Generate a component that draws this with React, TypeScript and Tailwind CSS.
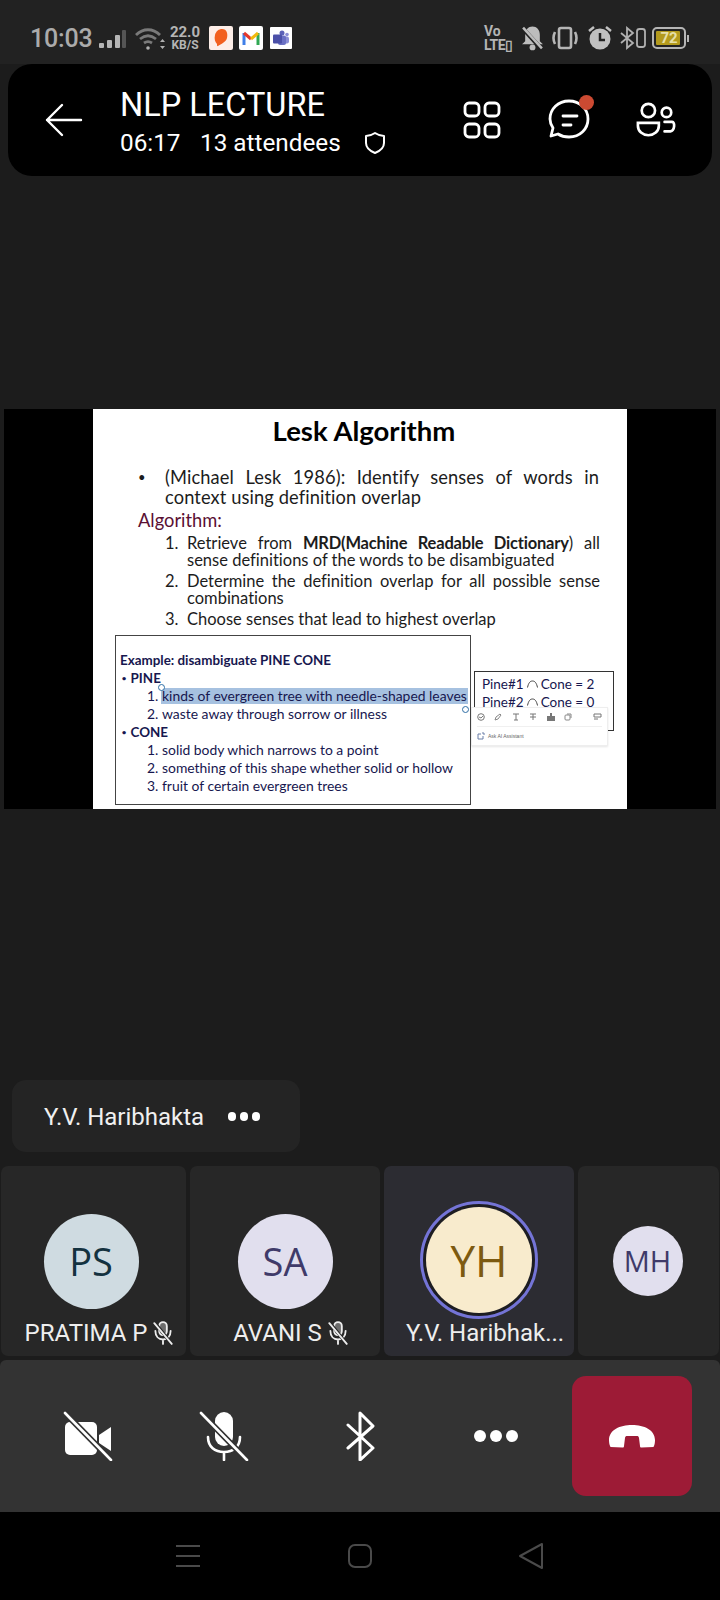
import type { ReactNode } from "react";

const Arch = () => (
  <svg width="11" height="8" viewBox="0 0 11 8" className="inline-block mx-[3px]" fill="none" stroke="#444" strokeWidth="1">
    <path d="M.5 7.500C1.500 3 3 1 5.500 1S9.500 3 10.500 7.500" />
  </svg>
);

const StatusBar = () => (
  <div className="h-[64px] bg-[#222222] relative flex items-center pt-[12px] pl-[30px] pr-[31px] font-['Roboto',sans-serif] text-[#ababab]">
    <span className="text-[25px] leading-none font-medium w-[67px] tracking-[-0.2px]">10:03</span>
    <svg width="30" height="20" viewBox="0 0 30 20" className="mt-[2px]">
      <rect x="2" y="14" width="5" height="5" rx="1" fill="#b5b5b5" />
      <rect x="10" y="11" width="5" height="8" rx="1" fill="#b5b5b5" />
      <rect x="18" y="6" width="5" height="13" rx="1" fill="#b5b5b5" />
      <rect x="25" y="1" width="4" height="18" rx="1" fill="#555" />
    </svg>
    <svg width="30" height="24" viewBox="0 0 30 24" className="ml-[8px] mt-[2px]" fill="none" stroke="#7a7a7a" strokeWidth="2.800">
      <path d="M1 8c7-7 17-7 24 0" />
      <path d="M5 12c5-4 11-4 16 0" />
      <path d="M9 16c3-2 5-2 8 0" />
      <circle cx="13" cy="21" r="1.800" fill="#b0b0b0" stroke="none" />
      <path d="M25 15l2.500-3 2.500 3zM25 19l2.500 3 2.500-3z" fill="#b0b0b0" stroke="none" />
    </svg>
    <div className="ml-[4px] w-[32px] flex flex-col items-center text-[15px] leading-[14px] font-bold text-[#b5b5b5]">
      <span>22.0</span>
      <span className="text-[12px] leading-[12px]">KB/S</span>
    </div>
    <div className="ml-[8px] w-[24px] h-[24px] bg-[#fdeee8] rounded-[2px] flex items-center justify-center">
      <svg width="16" height="20" viewBox="0 0 16 20"><path d="M9 1c5 0 6 5 5 9-1 4-6 6-9 8-1 .6-1-1-1-2C2 14 1 11 2 7c1-4 4-6 7-6z" fill="#f2601f" /></svg>
    </div>
    <div className="ml-[6px] w-[24px] h-[24px] bg-white rounded-[2px] flex items-center justify-center">
      <svg width="18" height="16" viewBox="0 0 18 16" fill="none" strokeWidth="3">
        <path d="M2 15V3" stroke="#3f7fe8" />
        <path d="M16 15V3" stroke="#30a853" />
        <path d="M2 3l7 6" stroke="#e5382c" />
        <path d="M9 9l7-6" stroke="#f3b90e" />
      </svg>
    </div>
    <div className="ml-[7px] w-[22px] h-[22px] bg-white rounded-[1px] flex items-center justify-center">
      <svg width="18" height="16" viewBox="0 0 18 16">
        <circle cx="10" cy="3" r="2.500" fill="#5c62b8" />
        <circle cx="15" cy="4.500" r="1.800" fill="#8b8fd6" />
        <rect x="11" y="6.500" width="6" height="7" rx="2" fill="#8b8fd6" />
        <rect x="6" y="5.500" width="8" height="9.500" rx="2" fill="#6a70c4" />
        <rect x="1" y="4.500" width="9" height="9" rx="1" fill="#4b50a8" />
      </svg>
    </div>

    <div className="ml-auto flex items-center">
      <div className="w-[30px] flex flex-col text-[14px] leading-[14px] font-bold text-[#b5b5b5]">
        <span>Vo</span>
        <span className="tracking-[-0.5px] whitespace-nowrap">LTE▯</span>
      </div>
      <svg width="23" height="26" viewBox="0 0 22 24" className="ml-[7px]">
        <path d="M11 1c4 0 7 3 7 8v6l3 3H1l3-3V9c0-5 3-8 7-8z" fill="#bdbdbd" />
        <circle cx="11" cy="21" r="2.800" fill="#bdbdbd" />
        <path d="M1 2l19 21" stroke="#222" strokeWidth="4" />
        <path d="M2 2l18 20" stroke="#bdbdbd" strokeWidth="2.400" />
      </svg>
      <svg width="30" height="24" viewBox="0 0 30 24" className="ml-[6px]" fill="none" stroke="#b5b5b5" strokeWidth="2.600">
        <rect x="9" y="2" width="12" height="20" rx="2" />
        <path d="M5 6c-2 4-2 8 0 12M25 6c2 4 2 8 0 12" />
      </svg>
      <svg width="26" height="26" viewBox="0 0 26 26" className="ml-[7px]">
        <circle cx="13" cy="14" r="10.500" fill="#c0c0c0" />
        <path d="M13 8v7h5" stroke="#222" strokeWidth="2.500" fill="none" />
        <path d="M2 6l5-4M24 6l-5-4" stroke="#c0c0c0" strokeWidth="2.500" />
      </svg>
      <svg width="27" height="24" viewBox="0 0 27 24" className="ml-[7px]" fill="none" stroke="#b0b0b0" strokeWidth="1.800">
        <path d="M1 7l12 10-6 5V2l6 5L1 17" />
        <rect x="17" y="3" width="8" height="18" rx="2.500" />
      </svg>
      <div className="ml-[5px] w-[34px] h-[22px] rounded-[5px] border-2 border-[#b5b5b5] p-[2px] relative">
        <div className="h-full w-[24px] bg-[#b39a1d] rounded-[1px]" />
        <span className="absolute inset-0 flex items-center justify-center text-[15px] font-bold leading-none text-[#e6dfa8]">72</span>
      </div>
      <div className="w-[2px] h-[7px] bg-[#b5b5b5] ml-[1px]" />
    </div>
  </div>
);

const MeetingHeader = () => (
  <div className="mx-[8px] h-[112px] rounded-[24px] bg-black flex items-center text-white font-['Roboto',sans-serif]">
    <svg width="38" height="34" viewBox="0 0 38 34" className="ml-[37px]" fill="none" stroke="#fff" strokeWidth="2.400" strokeLinecap="round" strokeLinejoin="round">
      <path d="M36 17H2M17 2L2 17l15 15" />
    </svg>
    <div className="ml-[37px] flex flex-col mt-[3px]">
      <span className="text-[32.500px] leading-[36px] whitespace-nowrap">NLP LECTURE</span>
      <div className="flex items-center text-[24.300px] leading-[28px] mt-[6px]">
        <span className="w-[80px]">06:17</span>
        <span>13 attendees</span>
        <svg width="22" height="24" viewBox="0 0 22 24" className="ml-[23px]" fill="none" stroke="#fff" strokeWidth="2" strokeLinejoin="round">
          <path d="M11 2c3 2 6 3 9 3v7c0 5-4 8-9 10-5-2-9-5-9-10V5c3 0 6-1 9-3z" />
        </svg>
      </div>
    </div>
    <svg width="38" height="38" viewBox="0 0 38 38" className="ml-auto" fill="none" stroke="#fff" strokeWidth="2.800">
      <rect x="2" y="2" width="14" height="13" rx="4" />
      <rect x="22" y="2" width="14" height="13" rx="4" />
      <rect x="2" y="23" width="14" height="13" rx="4" />
      <rect x="22" y="23" width="14" height="13" rx="4" />
    </svg>
    <div className="relative ml-[47px] w-[42px] h-[42px]">
      <svg width="42" height="42" viewBox="0 0 42 42" fill="none" stroke="#fff" strokeWidth="2.800" strokeLinecap="round" strokeLinejoin="round">
        <path d="M21 2c11 0 19 8 19 18s-8 18-19 18c-4 0-8-1-11-3l-7 2 2-8c-2-3-3-6-3-9C2 10 10 2 21 2z" />
        <path d="M15 17h14M15 26h8" />
      </svg>
      <span className="absolute -top-[4px] -right-[4px] w-[15px] h-[15px] rounded-full bg-[#cc4a32]" />
    </div>
    <svg width="40" height="38" viewBox="0 0 42 38" className="ml-[46px] mr-[36px]" fill="none" stroke="#fff" strokeWidth="2.800" strokeLinecap="round">
      <circle cx="13" cy="9" r="7" />
      <circle cx="32" cy="11" r="5" />
      <path d="M2 22h22v3c0 6-5 10-11 10S2 31 2 25z" />
      <path d="M30 21h8c3 0 3 9-2 10h-6" />
    </svg>
  </div>
);

const Example = ({ n, children, bold }: { n?: string; children: ReactNode; bold?: boolean }) =>
  n ? (
    <div className="flex pl-[31px] h-[18px] text-[13.900px]">
      <span className="w-[15px]">{n}</span>
      <span className="whitespace-nowrap">{children}</span>
    </div>
  ) : (
    <div className={`h-[18px] pl-[4px] whitespace-nowrap text-[13.400px] ${bold ? "font-bold" : ""}`}>{children}</div>
  );

const Slide = () => (
  <div className="h-[400px] mx-[4px] bg-black pl-[89px]">
    <div className="relative w-[534px] h-[400px] bg-white pt-[6px] font-['Lato',sans-serif] text-[#1c1c1c] [font-variant-ligatures:none]">
      <h1 className="text-center text-[27.500px] leading-[32px] font-bold text-black pl-[8px]">Lesk Algorithm</h1>
      <div className="mt-[20px] pl-[45px] flex">
        <span className="w-[27px] text-[13px] leading-[20px]">•</span>
        <p className="w-[434px] text-[18.300px] leading-[20px] text-justify tracking-[0.1px]">
          (Michael Lesk 1986): Identify senses of words in context using definition overlap
        </p>
      </div>
      <div className="pl-[45px] text-[18.300px] leading-[22px] mt-[2px] text-[#5a0f33]">Algorithm:</div>
      <ol className="pl-[72px] mt-[4px] w-[507px] text-[16.500px] leading-[17px]">
        <li className="flex">
          <span className="w-[22px] shrink-0">1.</span>
          <p className="text-justify">Retrieve from <b className="tracking-[-0.2px]">MRD(Machine Readable Dictionary</b>) all sense definitions of the words to be disambiguated</p>
        </li>
        <li className="flex mt-[4px]">
          <span className="w-[22px] shrink-0">2.</span>
          <p className="text-justify">Determine the definition overlap for all possible sense combinations</p>
        </li>
        <li className="flex mt-[4px]">
          <span className="w-[22px] shrink-0">3.</span>
          <p>Choose senses that lead to highest overlap</p>
        </li>
      </ol>
      <div className="ml-[22px] mt-[7px] w-[356px] h-[170px] border border-[#444] pt-[15px] leading-[18px] text-[#17174f]">
        <Example bold>Example: disambiguate PINE CONE</Example>
        <Example bold>{"\u2009"}<span className="text-[8px] align-[2px] mr-[1px]">•</span> PINE</Example>
        <Example n="1."><span className="bg-[#a6c1e0] text-[#17174f] -ml-[1px] pl-[1px] pr-[1px] inline-block h-[16px] leading-[16px] mt-[1px]">kinds of evergreen tree with needle-shaped leaves</span></Example>
        <Example n="2.">waste away through sorrow or illness</Example>
        <Example bold>{"\u2009"}<span className="text-[8px] align-[2px] mr-[1px]">•</span> CONE</Example>
        <Example n="1.">solid body which narrows to a point</Example>
        <Example n="2.">something of this shape whether solid or hollow</Example>
        <Example n="3.">fruit of certain evergreen trees</Example>
      </div>
      <span className="absolute left-[65px] top-[275px] w-[7px] h-[7px] rounded-full border border-[#2f6ea5] bg-white" />
      <span className="absolute left-[369px] top-[297px] w-[7px] h-[7px] rounded-full border border-[#2f6ea5] bg-white" />
      <div className="absolute left-[381px] top-[262px] w-[140px] h-[60px] border border-[#333] pl-[7px] pt-[3px] text-[13.500px] leading-[18px] text-[#17174f]">
        <div className="flex items-center">Pine#1<Arch />Cone = 2</div>
        <div className="flex items-center">Pine#2<Arch />Cone = 0</div>
      </div>
      <div className="absolute left-[378px] top-[298px] w-[137px] h-[39px] bg-white border border-[#eeeeee] px-[5px] shadow-[0_1px_2px_rgba(0,0,0,0.1)]">
        <div className="h-[19px] flex items-center justify-between text-[#777] border-b border-[#f0f0f0]">
          <svg width="8" height="8" viewBox="0 0 8 8" fill="none" stroke="#777"><circle cx="4" cy="4" r="3.300" /><path d="M2 4l2 1 2-2" /></svg>
          <svg width="8" height="8" viewBox="0 0 8 8" fill="none" stroke="#888"><path d="M1 7l1-3 4-3 1 1-3 4z" /></svg>
          <svg width="8" height="8" viewBox="0 0 8 8" fill="none" stroke="#777"><path d="M1 1h6M4 1v6M2 7h4" /></svg>
          <svg width="8" height="8" viewBox="0 0 8 8" fill="none" stroke="#777"><path d="M1 1h6M4 1v6M1 4h6" /></svg>
          <svg width="8" height="8" viewBox="0 0 8 8" fill="#777"><path d="M3 0h2v3h3v5H0V3h3z" /></svg>
          <svg width="8" height="8" viewBox="0 0 8 8" fill="none" stroke="#888"><rect x="1" y="2" width="5" height="5" rx="1" /><path d="M3 1h4v4" /></svg>
          <span className="w-[2px]" />
          <svg width="9" height="8" viewBox="0 0 9 8" fill="none" stroke="#777"><path d="M1 1h7v3H1zM1 6h4" /></svg>
        </div>
        <div className="h-[18px] flex items-center gap-[3px] text-[#666] text-[5px] leading-none font-['Liberation_Sans',sans-serif]">
          <svg width="8" height="8" viewBox="0 0 8 8" fill="none" stroke="#6b7fa8"><path d="M6 4v3H1V2h3M5 1h2v2" /></svg>
          Ask AI Assistant
        </div>
      </div>
    </div>
  </div>
);

const MicOff = () => (
  <svg width="22" height="24" viewBox="0 0 20 22" fill="none" stroke="#ededed" strokeWidth="1.700" strokeLinecap="round">
    <rect x="6.500" y="1" width="7" height="12" rx="3.500" fill="#ededed" fillOpacity="0.35" />
    <path d="M3 9c0 5 3 8 7 8s7-3 7-8M10 17v4" />
    <path d="M2 1l16 20" strokeWidth="3" stroke="#272727" />
    <path d="M2 2l16 19" />
  </svg>
);

const Tile = ({ initials, name, muted, avatar, text, active, small, shift }: {
  initials: string; name?: string; muted?: boolean; avatar: string; text: string; active?: boolean; small?: boolean; shift?: string;
}) => (
  <div className={`relative h-[190px] rounded-[7px] flex flex-col items-center ${active ? "bg-[#2c2c32]" : "bg-[#272727]"}`}>
    <div className={`h-[143px] flex items-center justify-center pt-[47px] ${shift ?? ""}`}>
      {active ? (
        <div className="w-[118px] h-[118px] -mt-[2px] rounded-full border-[3px] border-[#7474d6] p-[3px] bg-[#1d1d22]">
          <div className={`w-full h-full rounded-full ${avatar} ${text} flex items-center justify-center text-[44px] font-medium font-['Open_Sans',sans-serif]`}>{initials}</div>
        </div>
      ) : (
        <div className={`rounded-full ${avatar} ${text} flex items-center justify-center font-medium font-['Open_Sans',sans-serif] ${small ? "w-[70px] h-[70px] text-[29px]" : "w-[95px] h-[95px] text-[38px]"}`}>{initials}</div>
      )}
    </div>
    {name && (
      <div className="mt-[10px] ml-[12px] flex items-center gap-[5px] text-[24px] leading-[28px] text-[#eeeeee] whitespace-nowrap font-['Roboto',sans-serif]">
        <span>{name}</span>
        {muted && <MicOff />}
      </div>
    )}
  </div>
);

const Controls = () => (
  <div className="h-[152px] bg-[#333333] rounded-t-[6px] flex items-center relative">
    <svg width="50" height="50" viewBox="0 0 50 50" className="ml-[63px]">
      <rect x="2" y="11" width="32" height="33" rx="5" fill="#fff" />
      <path d="M36 24l12-8v24l-12-8z" fill="#fff" />
      <path d="M1 1l47 48" stroke="#333" strokeWidth="6" />
      <path d="M2 2l46 47" stroke="#fff" strokeWidth="2.600" strokeLinecap="round" />
    </svg>
    <svg width="50" height="50" viewBox="0 0 50 50" className="ml-[86px]" fill="none" stroke="#fff" strokeWidth="2.600" strokeLinecap="round">
      <rect x="16" y="1" width="18" height="34" rx="9" fill="#fff" stroke="none" />
      <path d="M9 26c0 10 7 15 16 15s16-5 16-15M25 41v8" />
      <path d="M1 1l47 48" stroke="#333" strokeWidth="6" />
      <path d="M2 2l46 47" />
    </svg>
    <svg width="30" height="50" viewBox="0 0 30 50" className="ml-[97px]" fill="none" stroke="#fff" strokeWidth="3" strokeLinejoin="round" strokeLinecap="round">
      <path d="M2 14l25 23-13 12V2l13 13L2 37" />
    </svg>
    <div className="ml-[98px] flex gap-[4px]">
      <span className="w-[12px] h-[12px] rounded-full bg-white" />
      <span className="w-[12px] h-[12px] rounded-full bg-white" />
      <span className="w-[12px] h-[12px] rounded-full bg-white" />
    </div>
    <div className="ml-auto mr-[28px] w-[120px] h-[120px] rounded-[14px] bg-[#9d1b36] flex items-center justify-center">
      <svg width="48" height="24" viewBox="0 0 48 24">
        <path d="M1 16C1 6 12 1 24 1s23 5 23 15c0 3-.5 5-1.500 7l-12 .5c-1 0-1.500-.5-1.500-1.500l-1-8c-.2-1.500-1-2-2-2h-10c-1 0-1.800.5-2 2l-1 8c0 1-.5 1.500-1.500 1.500L2.500 23C1.500 21 1 19 1 16z" fill="#fff" />
      </svg>
    </div>
  </div>
);

const NavBar = () => (
  <div className="h-[88px] bg-black flex items-center">
    <svg width="26" height="24" viewBox="0 0 26 24" className="ml-[175px]" stroke="#4a4a4a" strokeWidth="2">
      <path d="M1 2h24M1 12h24M1 22h24" />
    </svg>
    <svg width="24" height="24" viewBox="0 0 24 24" className="ml-[147px]" fill="none" stroke="#4a4a4a" strokeWidth="2">
      <rect x="1" y="1" width="22" height="22" rx="6" />
    </svg>
    <svg width="26" height="28" viewBox="0 0 26 28" className="ml-[146px]" fill="none" stroke="#4a4a4a" strokeWidth="2" strokeLinejoin="round">
      <path d="M24 2v24L2 14z" />
    </svg>
  </div>
);

export default function App() {
  return (
    <div className="w-[720px] h-[1600px] overflow-hidden bg-[#1c1c1c] flex flex-col">
      <StatusBar />
      <MeetingHeader />
      <div className="h-[233px]" />
      <Slide />
      <div className="mt-[271px] ml-[12px] w-[288px] h-[72px] rounded-[14px] bg-[#242424] flex items-center pl-[32px] font-['Roboto',sans-serif] text-[#f0f0f0] text-[24px] pt-[1px]">
        <span>Y.V. Haribhakta</span>
        <div className="ml-[24px] flex gap-[4px]">
          <span className="w-[8px] h-[9px] rounded-full bg-white" />
          <span className="w-[8px] h-[9px] rounded-full bg-white" />
          <span className="w-[8px] h-[9px] rounded-full bg-white" />
        </div>
      </div>
      <div className="mt-[14px] ml-[1px] grid grid-cols-[185px_190px_190px_141px] gap-[4px]">
        <Tile initials="PS" name="PRATIMA P" muted avatar="bg-[#cfdbe1]" text="text-[#14323f]" shift="mr-[5px]" />
        <Tile initials="SA" name="AVANI S" muted avatar="bg-[#e1dfee]" text="text-[#3f3a69]" />
        <Tile initials="YH" name="Y.V. Haribhak..." active avatar="bg-[#f8ebcd]" text="text-[#7d5a10]" />
        <Tile initials="MH" avatar="bg-[#e1dfee]" text="text-[#3f3a69]" small shift="mr-[2px]" />
      </div>
      <div className="mt-[4px]">
        <Controls />
      </div>
      <NavBar />
    </div>
  );
}
